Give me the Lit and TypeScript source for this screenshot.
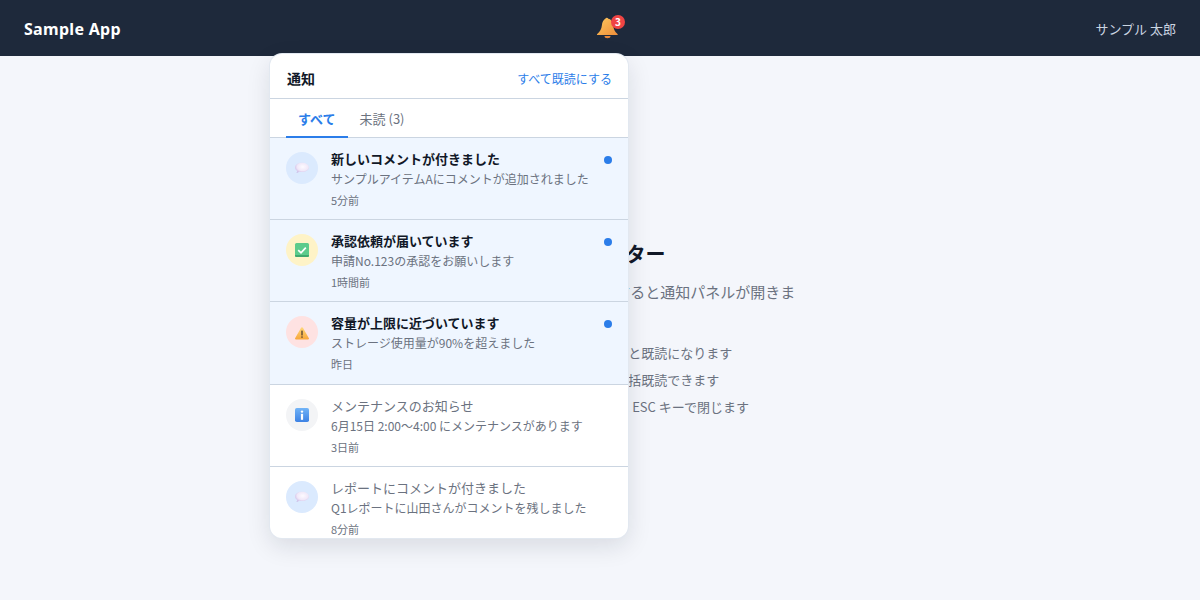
import { LitElement, html, css, svg } from "lit";
import { customElement } from "lit/decorators.js";

// Emoji-like icons are drawn by hand, the sandbox emoji font looks different
const bubble = svg`<svg viewBox="0 0 16 16" width="16" height="16">
  <defs><radialGradient id="bub" cx="0.55" cy="0.4" r="0.65">
    <stop offset="0" stop-color="#fdfaff"/><stop offset="0.6" stop-color="#f0e8f8"/><stop offset="1" stop-color="#c9b6e4"/>
  </radialGradient></defs>
  <path d="M8 2.800C4.300 2.800 1 4.700 1 7.600c0 1.500 1 2.700 2.300 3.400-.1.800-.5 1.400-1 1.900 1.200 0 2.200-.4 3-1.100.8.200 1.700.3 2.700.3 3.700 0 7-1.800 7-4.500S11.700 2.800 8 2.800z" fill="url(#bub)"/>
</svg>`;

const check = svg`<svg viewBox="0 0 16 16" width="16" height="16">
  <rect x="1" y="1" width="14" height="14" rx="1.500" fill="#5ccb8c"/>
  <path d="M1 13h14v.5a1.500 1.500 0 0 1-1.500 1.500h-11A1.500 1.500 0 0 1 1 13.500z" fill="#3fa86f"/>
  <path d="M4.200 8.200 7 10.800l4.800-5.200" fill="none" stroke="#fff" stroke-width="1.700"/>
</svg>`;

const warn = svg`<svg viewBox="0 0 16 16" width="16" height="16">
  <defs><linearGradient id="warn" x1="0" y1="0" x2="0" y2="1">
    <stop offset="0" stop-color="#ffd87a"/><stop offset="1" stop-color="#f7a63a"/>
  </linearGradient></defs>
  <path d="M8 3.200c.4 0 .7.200.9.500l6 10.600c.3.600-.1 1.200-.8 1.200H1.900c-.7 0-1.100-.6-.8-1.200l6-10.600c.2-.3.500-.5.900-.5z" fill="url(#warn)"/>
  <rect x="7.300" y="6.500" width="1.400" height="5" rx=".5" fill="#5a4632"/>
  <circle cx="8" cy="13" r=".85" fill="#5a4632"/>
</svg>`;

const info = svg`<svg viewBox="0 0 16 16" width="16" height="16">
  <defs><linearGradient id="inf" x1="0" y1="0" x2="0" y2="1">
    <stop offset="0" stop-color="#72b4f7"/><stop offset="1" stop-color="#3d82e4"/>
  </linearGradient></defs>
  <rect x="1" y="1" width="14" height="14" rx="1.800" fill="url(#inf)"/>
  <rect x="6.900" y="6.800" width="2.200" height="6" fill="#fff"/>
  <circle cx="8" cy="4.600" r="1.200" fill="#fff"/>
</svg>`;

const bell = svg`<svg viewBox="0 0 24 24" width="24" height="24">
  <defs><linearGradient id="bel" x1="0" y1="0" x2="1" y2="1">
    <stop offset="0" stop-color="#fcc85e"/><stop offset="1" stop-color="#ee8d3a"/>
  </linearGradient></defs>
  <path d="M9.500 2.600c.5-1 2.200-1 2.800.1 3 .5 4.800 3.300 5 6.600.2 3.800 1.500 6.600 4.200 8.800.5.400.2 1-.4 1H1.600c-.6 0-.9-.6-.4-1 2.700-2.100 4.300-5 4.700-8.800.3-3 1.500-5.500 3.600-6.700z" fill="url(#bel)"/>
  <path d="M8.500 20h6a3 2.200 0 0 1-6 0z" fill="#e8873a"/>
</svg>`;

const items = [
  { icon: bubble, tone: "blue", title: "新しいコメントが付きました", body: "サンプルアイテムAにコメントが追加されました", time: "5分前", unread: true },
  { icon: check, tone: "yellow", title: "承認依頼が届いています", body: "申請No.123の承認をお願いします", time: "1時間前", unread: true },
  { icon: warn, tone: "red", title: "容量が上限に近づいています", body: "ストレージ使用量が90%を超えました", time: "昨日", unread: true },
  { icon: info, tone: "gray", title: "メンテナンスのお知らせ", body: "6月15日 2:00〜4:00 にメンテナンスがあります", time: "3日前", unread: false },
  { icon: bubble, tone: "blue", title: "レポートにコメントが付きました", body: "Q1レポートに山田さんがコメントを残しました", time: "8分前", unread: false },
];

@customElement("app-root")
export class AppRoot extends LitElement {
  static styles = css`
    :host {
      display: block;
      height: 600px;
      overflow: hidden;
      background: #f4f6fb;
      font-family: "Noto Sans CJK JP", "Noto Sans", sans-serif;
      color: #1f2937;
    }
    .bar {
      height: 56px;
      background: #1e293b;
      display: flex;
      align-items: center;
      justify-content: space-between;
      padding: 0 24px;
      position: relative;
    }
    .brand {
      color: #fff;
      font-family: "Noto Sans", sans-serif;
      font-size: 16px;
      font-weight: 700;
      letter-spacing: 0.3px;
      padding-top: 2px;
    }
    .user {
      color: #cbd5e1;
      font-size: 13px;
    }
    .bell {
      position: absolute;
      left: 596px;
      top: 16px;
      width: 24px;
      height: 24px;
    }
    .badge {
      position: absolute;
      left: 15px;
      top: -1px;
      width: 14px;
      height: 14px;
      border-radius: 50%;
      background: #ef4444;
      color: #fff;
      font-size: 10px;
      font-weight: 700;
      line-height: 14px;
      text-align: center;
    }
    main {
      width: 400px;
      margin: 0 0 0 406px;
      padding-top: 184px;
    }
    h1 {
      margin: 0 0 12px;
      font-size: 20px;
      line-height: 28px;
      color: #111827;
    }
    .lead {
      margin: 0 0 11px;
      font-size: 15px;
      line-height: 24px;
      color: #6b7280;
    }
    ul {
      margin: 0;
      padding: 0 0 0 15.500px;
      font-size: 13px;
      line-height: 27px;
      color: #6b7280;
    }
    .panel {
      position: absolute;
      left: 270px;
      top: 54px;
      width: 358px;
      height: 484px;
      background: #fff;
      border-radius: 12px;
      box-shadow: 0 0 0 1px #e2e8f0, 0 8px 24px rgba(15, 23, 42, 0.12);
      overflow: hidden;
    }
    .head {
      height: 40px;
      padding: 4px 16px 0;
      display: flex;
      align-items: center;
      justify-content: space-between;
      border-bottom: 1px solid #cbd5e1;
    }
    .head b {
      font-size: 14px;
      color: #111827;
      margin-left: 1px;
    }
    .head span {
      font-size: 12px;
      color: #2b7de9;
    }
    .tabs {
      height: 38.700px;
      padding: 0 16px;
      display: flex;
      border-bottom: 1px solid #cbd5e1;
      box-sizing: border-box;
    }
    .tab {
      padding: 0 12px;
      font-size: 13px;
      line-height: 40px;
      color: #6b7280;
    }
    .tab.on {
      color: #2b7de9;
      font-weight: 700;
      border-bottom: 2px solid #2b7de9;
      height: 37px;
    }
    .item {
      display: flex;
      gap: 13px;
      padding: 14px 16px 0;
      height: 67.300px;
      border-bottom: 1px solid #cbd5e1;
    }
    .item.unread {
      background: #eff6ff;
    }
    .icon {
      flex: none;
      width: 32px;
      height: 32px;
      border-radius: 50%;
      display: flex;
      align-items: center;
      justify-content: center;
    }
    .blue { background: #dbeafe; }
    .yellow { background: #fef3c7; }
    .red { background: #fee2e2; }
    .gray { background: #f3f4f6; }
    .text {
      flex: 1;
      min-width: 0;
      margin-top: -1px;
    }
    .title {
      font-size: 13px;
      line-height: 16px;
      color: #6b7280;
    }
    .unread .title {
      font-weight: 700;
      color: #111827;
    }
    .body {
      margin-top: 4px;
      font-size: 12px;
      line-height: 16px;
      color: #6b7280;
    }
    .time {
      margin-top: 5px;
      font-size: 11px;
      line-height: 16px;
      color: #6b7280;
    }
    .dot {
      flex: none;
      width: 8px;
      height: 8px;
      margin-top: 4px;
      border-radius: 50%;
      background: #2b7de9;
    }
  `;

  render() {
    return html`
      <div class="bar">
        <span class="brand">Sample App</span>
        <div class="bell">${bell}<span class="badge">3</span></div>
        <span class="user">サンプル 太郎</span>
      </div>
      <main>
        <h1>サンプルアプリ通知センター</h1>
        <p class="lead">上部のベルアイコンをクリックすると通知パネルが開きます。</p>
        <ul>
          <li>一覧の通知アイテムをクリックすると既読になります</li>
          <li>「すべて既読にする」リンクから一括既読できます</li>
          <li>パネル外をクリックするか、または ESC キーで閉じます</li>
        </ul>
      </main>
      <div class="panel">
        <div class="head"><b>通知</b><span>すべて既読にする</span></div>
        <div class="tabs">
          <div class="tab on">すべて</div>
          <div class="tab">未読 (3)</div>
        </div>
        ${items.map(
          (n) => html`
            <div class="item ${n.unread ? "unread" : ""}">
              <div class="icon ${n.tone}">${n.icon}</div>
              <div class="text">
                <div class="title">${n.title}</div>
                <div class="body">${n.body}</div>
                <div class="time">${n.time}</div>
              </div>
              ${n.unread ? html`<div class="dot"></div>` : ""}
            </div>
          `
        )}
      </div>
    `;
  }
}
